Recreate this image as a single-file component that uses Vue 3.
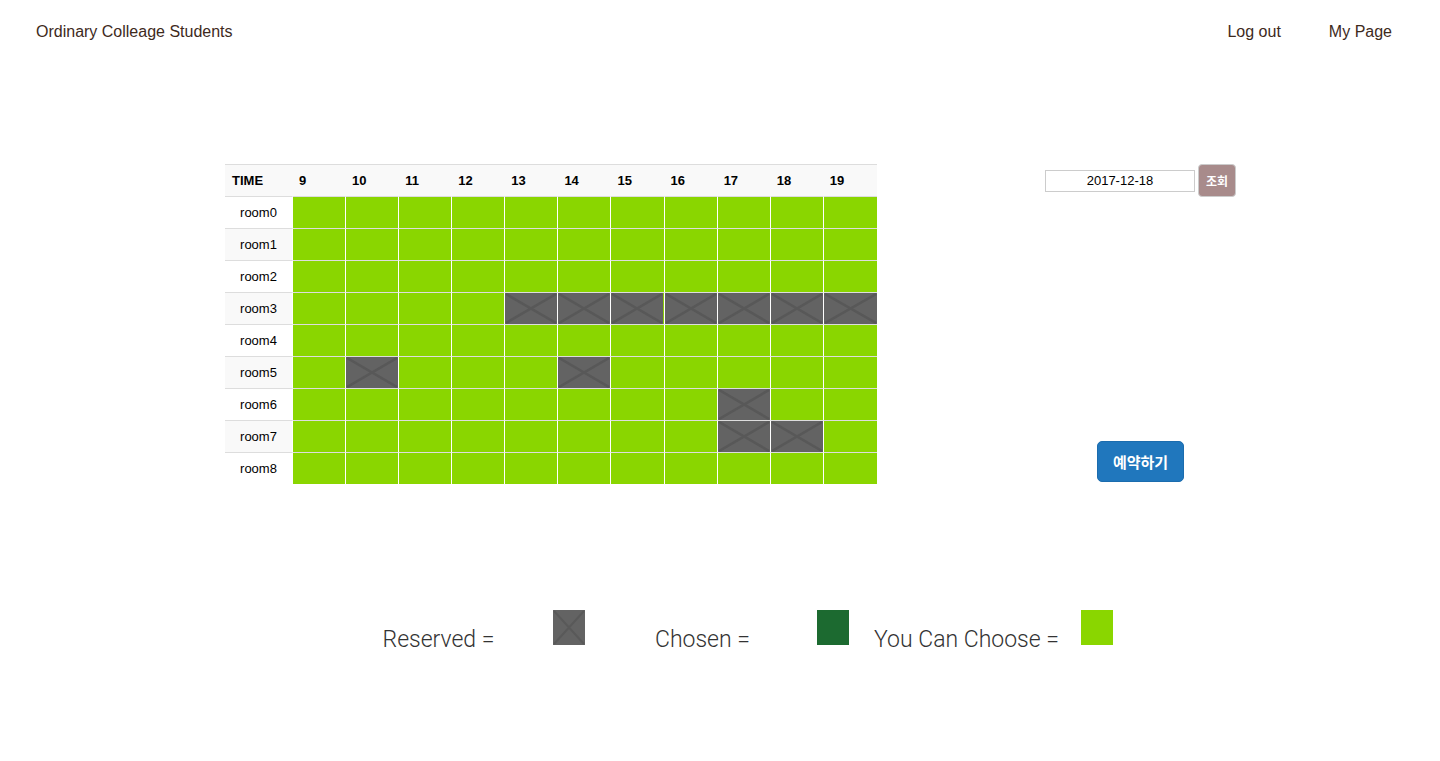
<script setup>
import { ref } from 'vue'

const hours = [9, 10, 11, 12, 13, 14, 15, 16, 17, 18, 19]
const reserved = {
  3: [13, 14, 15, 16, 17, 18, 19],
  5: [10, 14],
  6: [17],
  7: [17, 18],
}
const rooms = Array.from({ length: 9 }, (_, i) => ({
  name: `room${i}`,
  reserved: reserved[i] || [],
}))
const date = ref('2017-12-18')
</script>

<template>
  <div class="page">
    <header class="topbar">
      <a class="brand" href="#">Ordinary Colleage Students</a>
      <nav class="links">
        <a href="#">Log out</a>
        <a href="#">My Page</a>
      </nav>
    </header>

    <main>
      <section class="booking">
        <table class="schedule">
          <thead>
            <tr>
              <th class="time" scope="col">TIME</th>
              <th v-for="h in hours" :key="h" scope="col">{{ h }}</th>
            </tr>
          </thead>
          <tbody>
            <tr v-for="room in rooms" :key="room.name">
              <th class="room" scope="row">{{ room.name }}</th>
              <td v-for="h in hours" :key="h" class="slot">
                <svg v-if="room.reserved.includes(h)" class="cross" viewBox="0 0 52 31" preserveAspectRatio="none">
                  <rect width="52" height="31" fill="#636363" />
                  <path d="M1 1L51 30M51 1L1 30" stroke="#585858" stroke-width="2.6" />
                </svg>
              </td>
            </tr>
          </tbody>
        </table>

        <aside class="panel">
          <form class="search" @submit.prevent>
            <input v-model="date" class="date" type="text" aria-label="날짜" />
            <button class="lookup" type="submit">조회</button>
          </form>
          <button class="reserve" type="button">예약하기</button>
        </aside>
      </section>

      <section class="legend">
        <div class="entry">
          <span class="label">Reserved =</span>
          <svg class="swatch" viewBox="0 0 32 35">
            <rect width="32" height="35" fill="#636363" />
            <path d="M1 1L31 34M31 1L1 34" stroke="#595959" stroke-width="2" />
          </svg>
        </div>
        <div class="entry">
          <span class="label">Chosen =</span>
          <span class="swatch chosen"></span>
        </div>
        <div class="entry">
          <span class="label">You Can Choose =</span>
          <span class="swatch open"></span>
        </div>
      </section>
    </main>
  </div>
</template>

<style>
body {
  background: #fff;
}
</style>

<style scoped>
.page {
  font-family: "Liberation Sans", "Noto Sans CJK KR", sans-serif;
  color: #000;
}
.topbar {
  display: flex;
  justify-content: space-between;
  align-items: center;
  height: 64px;
  padding: 0 48px 0 36px;
  font-size: 16px;
}
.topbar a {
  color: #3e2a1c;
  text-decoration: none;
}
.links {
  display: flex;
  gap: 48px;
}
.booking {
  display: grid;
  grid-template-columns: 652fr 563fr;
  margin: 100px 0 0 15.625%;
}
.schedule {
  width: 100%;
  table-layout: fixed;
  border-collapse: separate;
  border-spacing: 0;
  font-size: 13px;
  line-height: 15px;
}
.schedule th,
.schedule td {
  box-sizing: border-box;
  height: 32px;
  padding: 0;
  border-top: 1px solid #ddd;
}
.schedule thead th {
  padding: 0 6px;
  background: #f9f9f9;
  text-align: left;
}
.schedule thead .time {
  width: 68px;
  padding-left: 7px;
}
.schedule .room {
  font-weight: 400;
  text-align: center;
}
.schedule tbody th,
.schedule tbody td {
  border-right: 1px solid #fff;
}
.schedule tbody td:last-child {
  border-right: 0;
}
.schedule tbody tr:nth-child(even) .room {
  background: #f9f9f9;
}
.slot {
  background: #8ad600;
}
.cross {
  display: block;
  width: 100%;
  height: 31px;
}
.panel {
  display: flex;
  flex-direction: column;
  justify-content: space-between;
  align-items: center;
  padding: 0 36px 2px 0;
}
.search {
  display: flex;
  align-items: center;
  gap: 3px;
}
.date {
  box-sizing: border-box;
  width: 150px;
  height: 22px;
  padding: 0;
  border: 1px solid #ccc;
  background: #fff;
  color: #000;
  font: 13px "Liberation Sans", sans-serif;
  text-align: center;
}
.lookup {
  height: 33px;
  padding: 0 7px;
  border: 1px solid #ccc;
  border-radius: 4px;
  background: #a88b8b;
  color: #fff;
  font: 700 12px "Noto Sans CJK KR", sans-serif;
}
.reserve {
  height: 41px;
  padding: 0 15px;
  border: 1px solid #1b6cae;
  border-radius: 5px;
  background: #2077bd;
  color: #fff;
  font: 700 15px "Noto Sans CJK KR", sans-serif;
}
.legend {
  display: flex;
  justify-content: center;
  gap: 18px;
  margin-top: 126px;
  padding-left: 11px;
}
.entry {
  display: flex;
  align-items: flex-start;
  gap: 14px;
}
.label {
  width: 200px;
  padding-top: 15px;
  color: #333;
  font: 300 23px/30px Roboto, sans-serif;
  text-align: center;
  white-space: nowrap;
}
.swatch {
  width: 32px;
  height: 35px;
}
.chosen {
  background: #1c6a30;
}
.open {
  background: #8ad600;
}
</style>
